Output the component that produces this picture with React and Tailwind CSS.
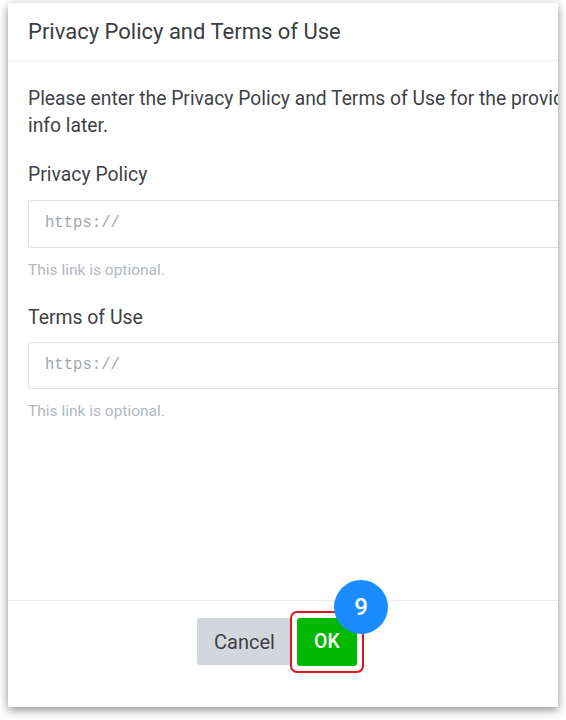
export default function App() {
  const font = { fontFamily: "Roboto, 'Liberation Sans', sans-serif" };
  return (
    <div className="w-[566px] h-[720px] bg-white pt-[3px] pl-[8px]" style={font}>
      <div className="w-[550px] h-[704px] bg-white overflow-hidden flex flex-col shadow-[0_3px_9px_rgba(0,0,0,0.45)]">
        <div className="h-[58px] shrink-0 border-b border-[#ececec] flex items-center px-[20px]">
          <h1 className="text-[22px] text-[#3a3d42] whitespace-nowrap leading-none">Privacy Policy and Terms of Use</h1>
        </div>
        <div className="flex-1 w-[900px] pl-[20px] pt-[24px]">
          <p className="text-[19.3px] leading-[27px] text-[#3f4247] whitespace-nowrap">
            Please enter the Privacy Policy and Terms of Use for the provider page. You can edit this
            <br />
            info later.
          </p>
          <div className="mt-[22px] text-[19.4px] leading-[27px] text-[#3f4247]">Privacy Policy</div>
          <div className="mt-[12px] h-[48px] border border-[#dcdfe3] rounded-[3px] flex items-center pl-[16px]">
            <span className="text-[15.6px] text-[#a2a6ac]" style={{ fontFamily: "'Liberation Mono', monospace" }}>https://</span>
          </div>
          <div className="mt-[13px] text-[15.5px] leading-[18px] text-[#b3b8bf]">This link is optional.</div>
          <div className="mt-[25px] text-[19.4px] leading-[27px] text-[#3f4247]">Terms of Use</div>
          <div className="mt-[11px] h-[47px] border border-[#dcdfe3] rounded-[3px] flex items-center pl-[16px]">
            <span className="text-[15.6px] text-[#a2a6ac]" style={{ fontFamily: "'Liberation Mono', monospace" }}>https://</span>
          </div>
          <div className="mt-[13px] text-[15.5px] leading-[18px] text-[#b3b8bf]">This link is optional.</div>
        </div>
        <div className="h-[107px] shrink-0 border-t border-[#ececec] flex justify-start pl-[189px] pt-[17px]">
          <div className="flex gap-[5px] items-start">
            <button className="w-[95px] h-[47px] bg-[#d3d6db] rounded-[3px] text-[20px] text-[#3f4247]">Cancel</button>
            <div className="relative">
              <button className="w-[60px] h-[48px] bg-[#00b900] rounded-[3px] text-[19.5px] font-medium text-white">OK</button>
              <div className="absolute -left-[7px] -top-[7px] w-[74px] h-[62px] rounded-[7px] border-2 border-[#e0161e]"></div>
              <div className="absolute left-[37px] -top-[38px] w-[54px] h-[54px] rounded-full bg-[#1a8cff] flex items-center justify-center text-white text-[24px] font-medium">9</div>
            </div>
          </div>
        </div>
      </div>
    </div>
  );
}
